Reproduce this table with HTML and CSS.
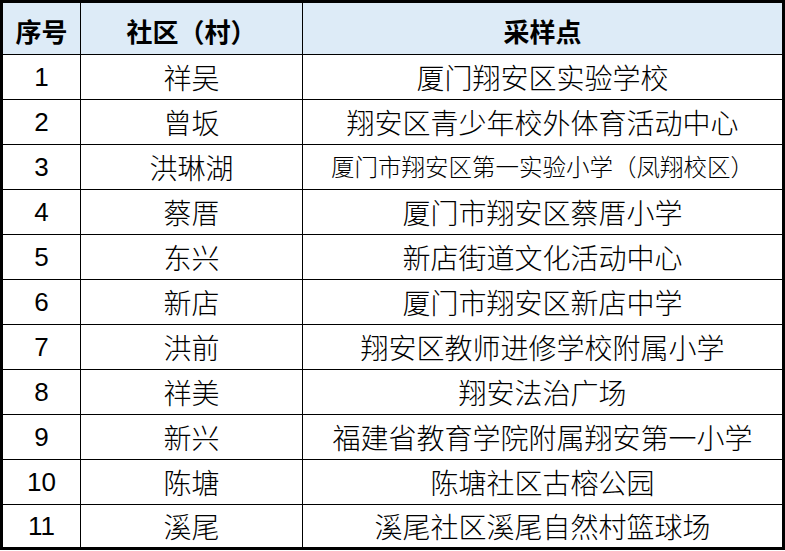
FILE: index.html
```html
<!DOCTYPE html>
<html lang="zh-CN">
<head>
<meta charset="utf-8">
<title>采样点</title>
<link rel="stylesheet" href="styles.css">
</head>
<body>
<div class="sheet">
  <div class="cell head">序号</div>
  <div class="cell head">社区（村）</div>
  <div class="cell head last">采样点</div>

  <div class="cell num">1</div><div class="cell">祥吴</div><div class="cell last">厦门翔安区实验学校</div>
  <div class="cell num">2</div><div class="cell">曾坂</div><div class="cell last">翔安区青少年校外体育活动中心</div>
  <div class="cell num">3</div><div class="cell">洪琳湖</div><div class="cell last small">厦门市翔安区第一实验小学（凤翔校区）</div>
  <div class="cell num">4</div><div class="cell">蔡厝</div><div class="cell last">厦门市翔安区蔡厝小学</div>
  <div class="cell num">5</div><div class="cell">东兴</div><div class="cell last">新店街道文化活动中心</div>
  <div class="cell num">6</div><div class="cell">新店</div><div class="cell last">厦门市翔安区新店中学</div>
  <div class="cell num">7</div><div class="cell">洪前</div><div class="cell last">翔安区教师进修学校附属小学</div>
  <div class="cell num">8</div><div class="cell">祥美</div><div class="cell last">翔安法治广场</div>
  <div class="cell num">9</div><div class="cell">新兴</div><div class="cell last">福建省教育学院附属翔安第一小学</div>
  <div class="cell num">10</div><div class="cell">陈塘</div><div class="cell last">陈塘社区古榕公园</div>
  <div class="cell num bottom">11</div><div class="cell bottom">溪尾</div><div class="cell last bottom">溪尾社区溪尾自然村篮球场</div>
</div>
</body>
</html>
```

FILE: styles.css
```css
html, body {
  margin: 0;
  padding: 0;
  background: #ffffff;
}

.sheet {
  width: 785px;
  height: 550px;
  box-sizing: border-box;
  border: 3px solid #000;
  display: grid;
  grid-template-columns: 78px 222px 479px;
  grid-template-rows: 52px repeat(10, 45px) 42px;
  font-family: "Noto Sans CJK SC", "Noto Sans", sans-serif;
  color: #000;
}

.cell {
  box-sizing: border-box;
  border-right: 1px solid #000;
  border-bottom: 1px solid #000;
  display: flex;
  align-items: center;
  justify-content: center;
  font-size: 28px;
  font-weight: 300;
  line-height: 1;
  white-space: nowrap;
}

.cell.last {
  border-right: none;
}

.cell.bottom {
  border-bottom: none;
}

.head {
  background: #ddebf7;
  font-weight: 700;
  font-size: 26px;
  padding-top: 4px;
}

.num {
  font-family: "Liberation Sans", Arial, sans-serif;
  font-weight: 400;
  font-size: 26px;
}

.small {
  font-size: 23.5px;
}
```
